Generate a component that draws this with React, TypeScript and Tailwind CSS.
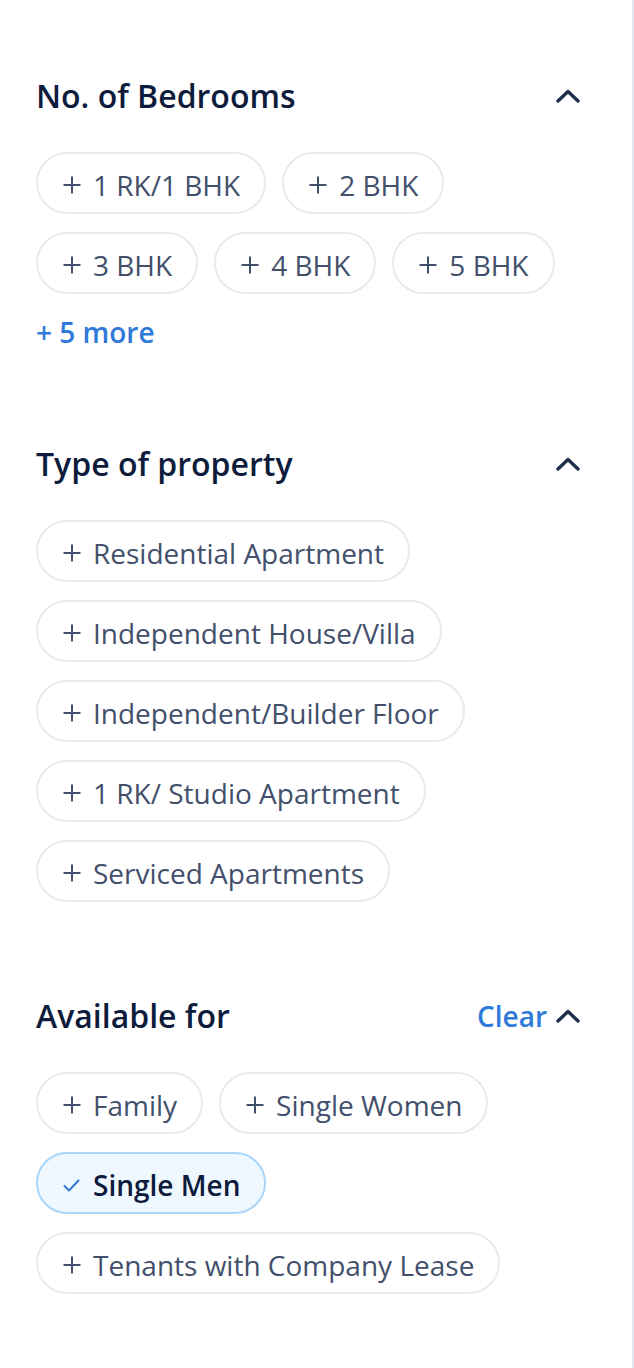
interface Section {
  title: string;
  options: string[];
  selected?: string[];
  more?: string;
  clear?: boolean;
}

const sections: Section[] = [
  {
    title: "No. of Bedrooms",
    options: ["1 RK/1 BHK", "2 BHK", "3 BHK", "4 BHK", "5 BHK"],
    more: "+ 5 more",
  },
  {
    title: "Type of property",
    options: [
      "Residential Apartment",
      "Independent House/Villa",
      "Independent/Builder Floor",
      "1 RK/ Studio Apartment",
      "Serviced Apartments",
    ],
  },
  {
    title: "Available for",
    options: ["Family", "Single Women", "Single Men", "Tenants with Company Lease"],
    selected: ["Single Men"],
    clear: true,
  },
];

function ChevronUp() {
  return (
    <svg width="24" height="14" viewBox="0 0 24 14" fill="none">
      <polyline
        points="2,12 12,2.5 22,12"
        stroke="#22304f"
        strokeWidth="3.4"
        strokeLinecap="round"
        strokeLinejoin="round"
      />
    </svg>
  );
}

function PlusIcon() {
  return (
    <svg width="18" height="18" viewBox="0 0 18 18" fill="none" className="shrink-0">
      <path d="M9 0.5V17.5M0.5 9H17.5" stroke="#42506b" strokeWidth="2" />
    </svg>
  );
}

function CheckIcon() {
  return (
    <svg width="17" height="13" viewBox="0 0 17 13" fill="none" className="shrink-0">
      <polyline points="1.5,7 6,11.5 15.5,1.5" stroke="#2f7ad9" strokeWidth="2" strokeLinecap="round" strokeLinejoin="round" />
    </svg>
  );
}

function Chip({ label, active }: { label: string; active: boolean }) {
  if (active) {
    return (
      <button className="flex h-[62px] items-center gap-[13px] rounded-full border-2 border-[#a8d5fa] bg-[#f0f8ff] pl-[25px] pr-[24px] pt-[4px] text-[28px] font-semibold text-[#0d1c3d]">
        <CheckIcon />
        {label}
      </button>
    );
  }
  return (
    <button className="flex h-[62px] items-center gap-[12px] rounded-full border-2 border-[#e9eaef] bg-white pl-[25px] pr-[24px] pt-[4px] text-[28px] text-[#42506b]">
      <PlusIcon />
      {label}
    </button>
  );
}

export default function App() {
  return (
    <div
      className="min-h-[1368px] w-[634px] border-r-2 border-[#e3e6ee] bg-white pl-[36px] pr-[52px] pt-[76px]"
      style={{ fontFamily: '"Open Sans", "Noto Sans", sans-serif' }}
    >
      <div className="flex flex-col gap-[94px]">
        {sections.map((s) => (
          <div key={s.title} className="flex flex-col">
            {/* header */}
            <div className="flex h-[40px] items-center justify-between">
              <h2 className="text-[32px] font-semibold leading-[40px] text-[#0d1c3d]">{s.title}</h2>
              <div className="flex items-center gap-[9px]">
                {s.clear && (
                  <span className="text-[28px] font-semibold text-[#2f7ad9]">Clear</span>
                )}
                <ChevronUp />
              </div>
            </div>

            {/* chips */}
            <div className="mt-[36px] flex flex-wrap gap-x-[16px] gap-y-[18px]">
              {s.options.map((o) => (
                <Chip key={o} label={o} active={!!s.selected?.includes(o)} />
              ))}
            </div>

            {s.more && (
              <div className="mt-[20px] h-[36px] text-[28px] font-semibold leading-[36px] text-[#2f7ad9]">
                {s.more}
              </div>
            )}
          </div>
        ))}
      </div>
    </div>
  );
}
